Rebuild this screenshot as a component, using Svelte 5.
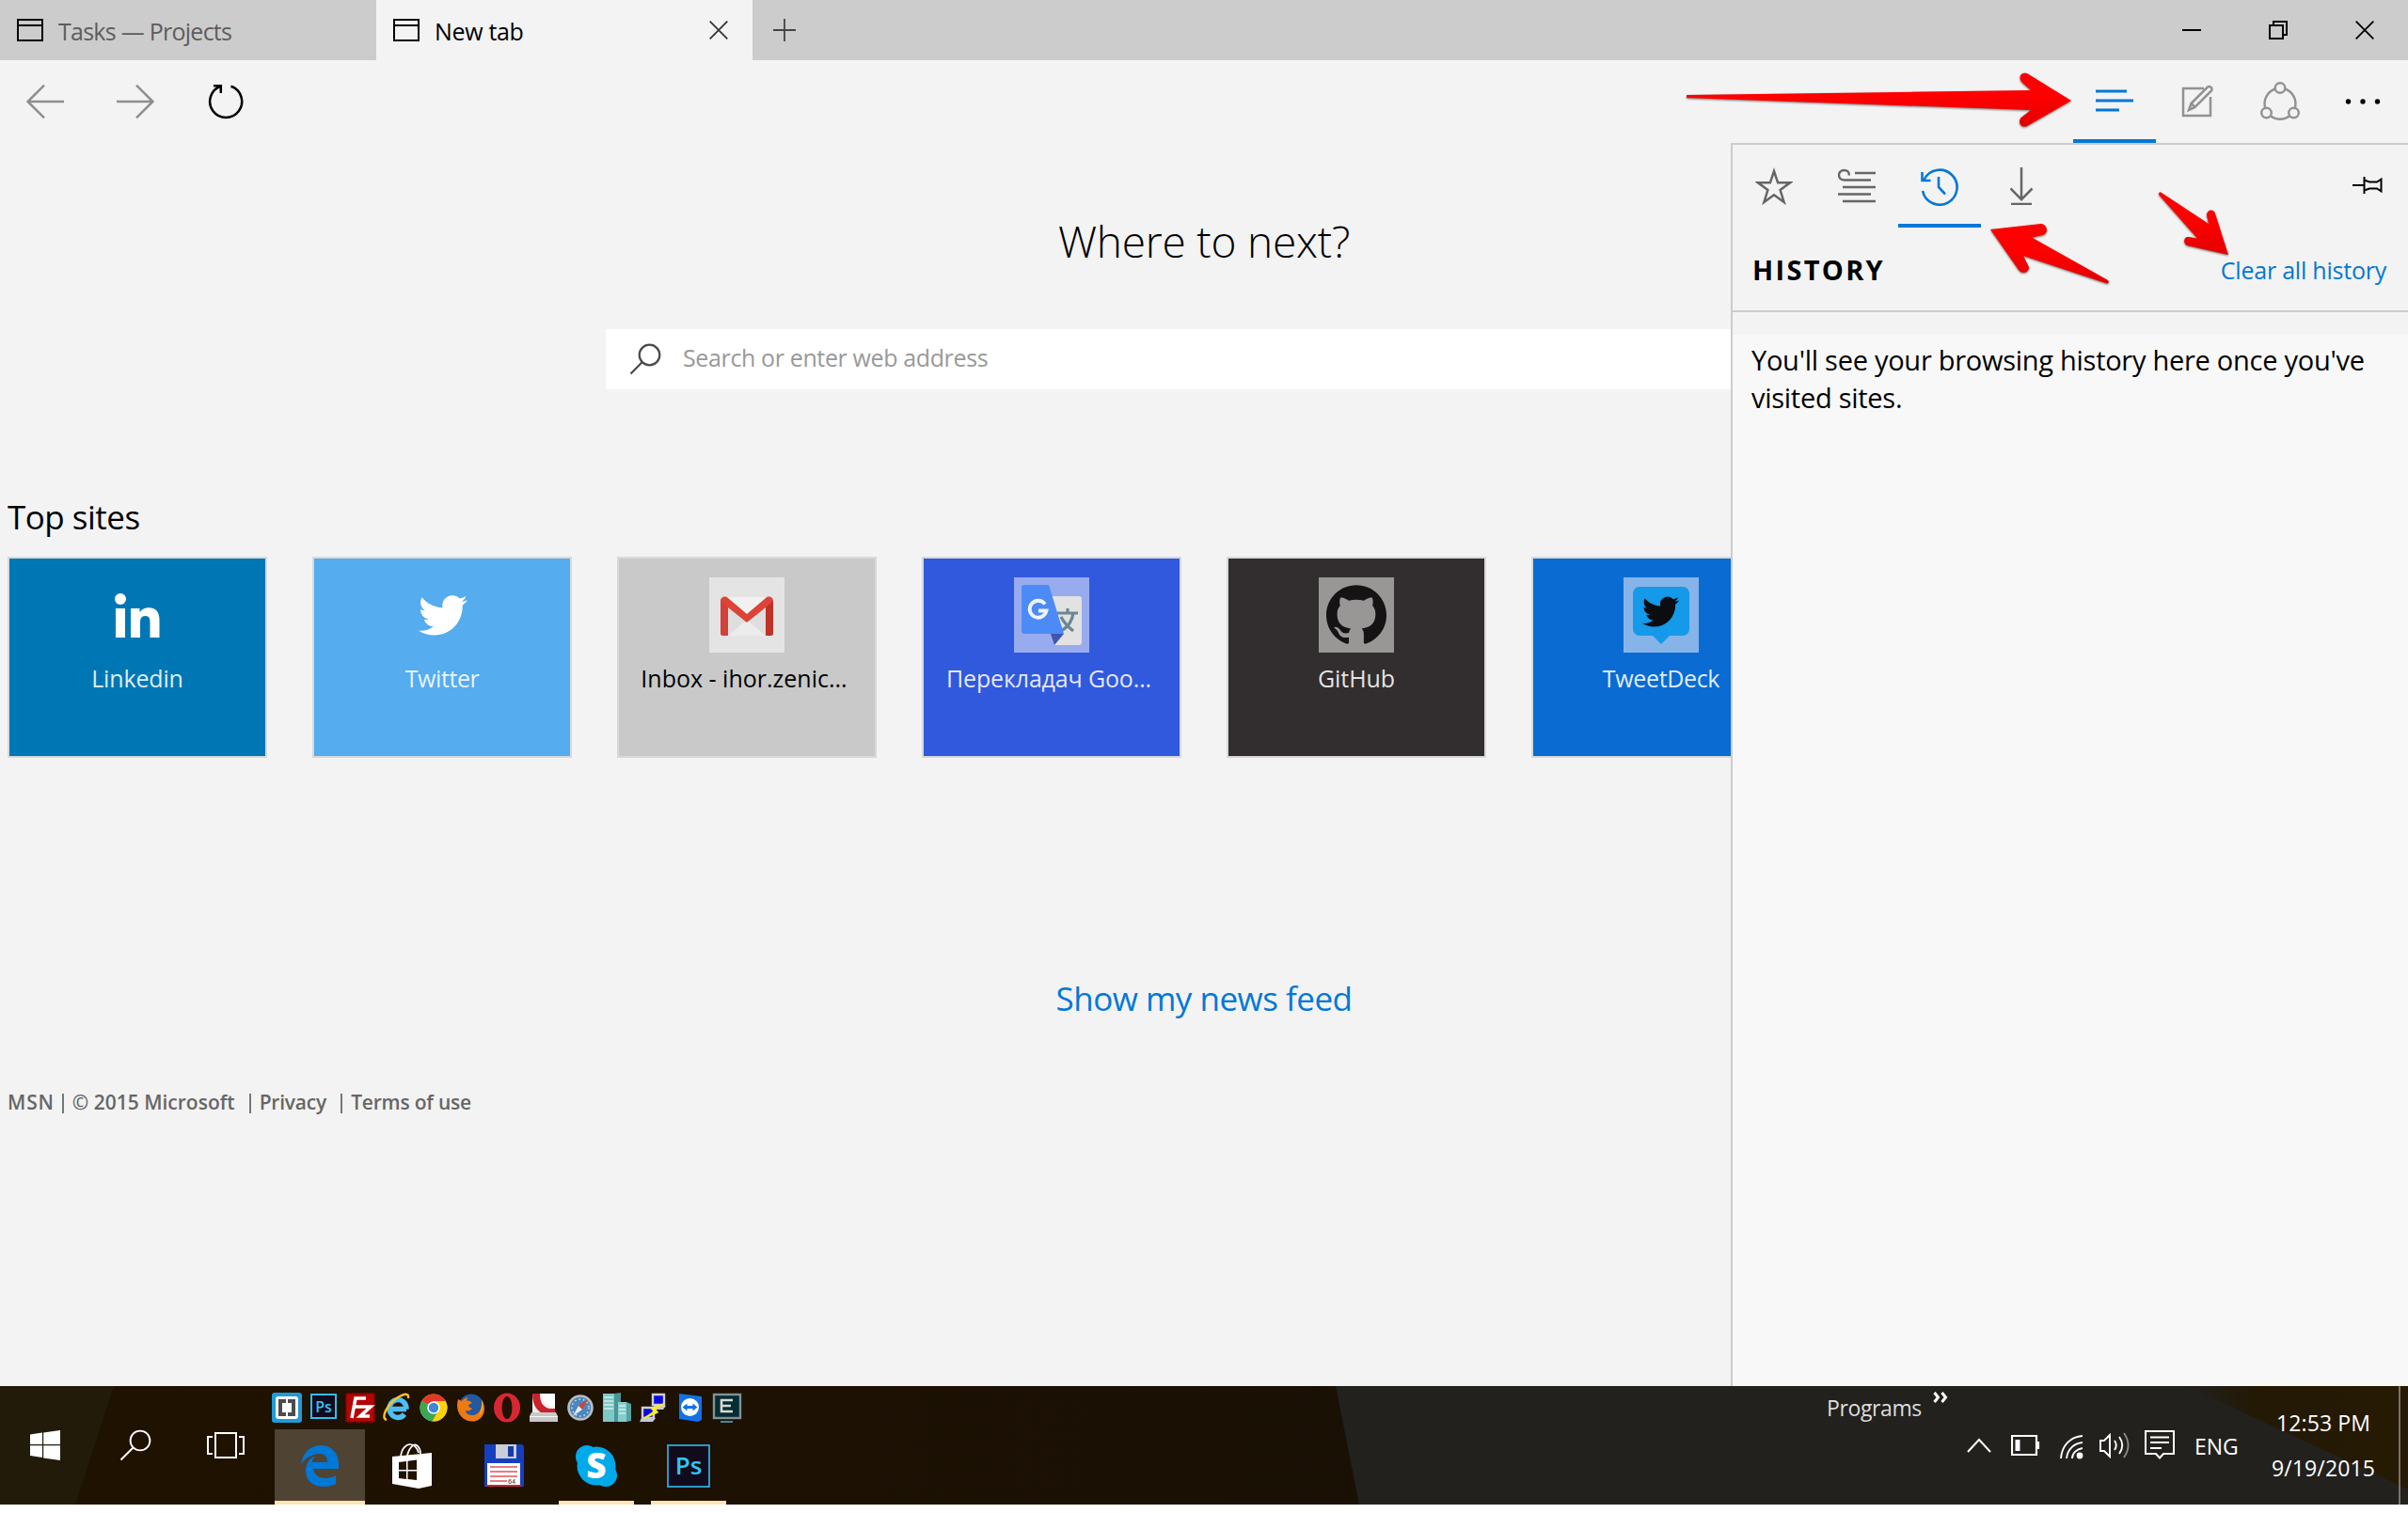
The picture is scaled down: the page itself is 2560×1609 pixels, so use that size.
<script>
  const sites = [
    { id: 'linkedin', label: 'Linkedin', bg: '#0077b5', spacing: -0.15 },
    { id: 'twitter', label: 'Twitter', bg: '#55acee', spacing: -0.4 },
    { id: 'gmail', label: 'Inbox - ihor.zenic...', bg: '#c9c9c9', dark: true, clipped: true, spacing: 0 },
    { id: 'translate', label: 'Перекладач Goo...', bg: '#3159de', clipped: true, spacing: -0.15 },
    { id: 'github', label: 'GitHub', bg: '#322e2f', spacing: -0.05 },
    { id: 'tweetdeck', label: 'TweetDeck', bg: '#0a6cd3', spacing: -0.35 }
  ];
  const quick = ['brackets', 'ps', 'filezilla', 'ie', 'chrome', 'firefox', 'opera', 'cureit', 'safari', 'servers', 'putty', 'teamviewer', 'console'];
  const birdPath = 'M23.953 4.57a10 10 0 01-2.825.775 4.958 4.958 0 002.163-2.723c-.951.555-2.005.959-3.127 1.184a4.92 4.92 0 00-8.384 4.482C7.69 8.095 4.067 6.13 1.64 3.162a4.822 4.822 0 00-.666 2.475c0 1.71.87 3.213 2.188 4.096a4.904 4.904 0 01-2.228-.616v.06a4.923 4.923 0 003.946 4.827 4.996 4.996 0 01-2.212.085 4.936 4.936 0 004.604 3.417 9.867 9.867 0 01-6.102 2.105c-.39 0-.779-.023-1.17-.067a13.995 13.995 0 007.557 2.209c9.053 0 13.998-7.496 13.998-13.985 0-.21 0-.42-.015-.63A9.935 9.935 0 0024 4.59z';
  const octocatPath = 'M12 .297c-6.63 0-12 5.373-12 12 0 5.303 3.438 9.8 8.205 11.385.6.113.82-.258.82-.577 0-.285-.01-1.04-.015-2.04-3.338.724-4.042-1.61-4.042-1.61C4.422 18.07 3.633 17.7 3.633 17.7c-1.087-.744.084-.729.084-.729 1.205.084 1.838 1.236 1.838 1.236 1.07 1.835 2.809 1.305 3.495.998.108-.776.417-1.305.76-1.605-2.665-.3-5.466-1.332-5.466-5.93 0-1.31.465-2.38 1.235-3.22-.135-.303-.54-1.523.105-3.176 0 0 1.005-.322 3.3 1.23.96-.267 1.98-.399 3-.405 1.02.006 2.04.138 3 .405 2.28-1.552 3.285-1.23 3.285-1.23.645 1.653.24 2.873.12 3.176.765.84 1.23 1.91 1.23 3.22 0 4.61-2.805 5.625-5.475 5.92.42.36.81 1.096.81 2.22 0 1.606-.015 2.896-.015 3.286 0 .315.21.69.825.57C20.565 22.092 24 17.592 24 12.297c0-6.627-5.373-12-12-12';
</script>

{#snippet pageIcon()}
  <svg class="page-icon" width="28" height="26" viewBox="0 0 28 26" fill="none" stroke="#000" stroke-width="2">
    <path d="M1 2h26v22H1zM1 8h26" />
  </svg>
{/snippet}

{#snippet siteIcon(id)}
  <svg width="80" height="80" viewBox="0 0 80 80">
    {#if id === 'linkedin'}
      <g fill="#fff">
        <circle cx="22" cy="23" r="6" />
        <rect x="17" y="33" width="10" height="31" />
        <path d="M33 33h9.500v4.300c1.600-2.900 5-5.100 9.500-5.100 9 0 11.500 6 11.500 14V64h-10V48.500c0-4-.6-7.500-5-7.500-4.500 0-5.500 3.500-5.500 7.300V64H33z" />
      </g>
    {:else if id === 'twitter'}
      <path fill="#fff" transform="translate(15 14.300) scale(2.167)" d={birdPath} />
    {:else if id === 'gmail'}
      <rect width="80" height="80" fill="#e4e4e4" />
      <path d="M14 21h52v41H14z" fill="#dedede" />
      <path d="M16 21h48L40 43z" fill="#f1f1f1" />
      <path d="M20 62l20-17 20 17z" fill="#ececec" />
      <path d="M12 25c0-4 5-6 8-3l20 17 20-17c3-3 8-1 8 3v34c0 2-1 3-3 3h-5V32L40 48 20 32v30h-5c-2 0-3-1-3-3z" fill="#db4437" />
      <path d="M60 32l8-7v34c0 2-1 3-3 3h-5z" fill="#bf3327" />
      <path d="M12 26l8 6v30h-5c-2 0-3-1-3-3z" fill="#d2403a" />
    {:else if id === 'translate'}
      <rect width="80" height="80" fill="#98abee" />
      <path d="M36 20h33a3 3 0 0 1 3 3v46a3 3 0 0 1-3 3H43z" fill="#e2e2e2" />
      <path d="M46 38h22M57 33v5M63 38c-1 8-6 15-13 19M50 42c3 6 8 11 13 15" stroke="#6b8791" stroke-width="3.200" fill="none" />
      <path d="M11 8h26l16 52H11a3 3 0 0 1-3-3V11a3 3 0 0 1 3-3z" fill="#4c8bf5" />
      <path d="M39 60h14L43 72z" fill="#4055b4" />
      <path d="M33 28.500a9 9 0 1 0 1.500 7H26" fill="none" stroke="#eef3fc" stroke-width="3.800" />
    {:else if id === 'github'}
      <rect width="80" height="80" fill="#999796" />
      <path fill="#151314" transform="translate(8 7.500) scale(2.667)" d={octocatPath} />
    {:else}
      <rect width="80" height="80" fill="#86b4e8" />
      <path d="M17 10h46a7 7 0 0 1 7 7v38a7 7 0 0 1-7 7H49l-9 9-9-9H17a7 7 0 0 1-7-7V17a7 7 0 0 1 7-7z" fill="#1599e9" />
      <path fill="#0b0d10" transform="translate(20 17) scale(1.630)" d={birdPath} />
    {/if}
  </svg>
{/snippet}

{#snippet quickIcon(id)}
  <svg width="32" height="32" viewBox="0 0 32 32">
    {#if id === 'brackets'}
      <rect width="32" height="32" rx="3" fill="#1f9bd8" />
      <rect x="4" y="4" width="24" height="24" rx="3" fill="#fff" />
      <path d="M15 9H9v14h6M17 9h6v14h-6" fill="none" stroke="#4c4c4c" stroke-width="4" />
    {:else if id === 'ps'}
      <rect x="3" y="2" width="26" height="25" fill="#120b1f" stroke="#33bdf0" stroke-width="2" />
      <text x="16" y="20.500" text-anchor="middle" class="glyph" font-size="16" fill="#31c5f4">Ps</text>
    {:else if id === 'filezilla'}
      <rect x="1" y="1" width="30" height="30" fill="#b50404" stroke="#8a0000" stroke-width="2" stroke-dasharray="2 1" />
      <path d="M7 27l4-21h11M9 15h9M17 15h10L16 25h10" fill="none" stroke="#fff" stroke-width="3.600" />
    {:else if id === 'ie'}
      <path d="M26 17.500H10M26 17.500A9 9.500 0 1 0 24 23" fill="none" stroke="#4fbdf2" stroke-width="5.400" />
      <path d="M5 29C-2 27 6 12 17 5c7-4 12-5 11 1" fill="none" stroke="#f5c32c" stroke-width="2.400" />
    {:else if id === 'chrome'}
      <circle cx="16" cy="16" r="14.500" fill="#fcd209" />
      <path d="M16 16L3.400 8.800A14.500 14.500 0 0 1 28.600 9z" fill="#e2382b" />
      <path d="M16 16L3.400 8.800A14.500 14.500 0 0 0 14.500 30.400L21 19z" fill="#3aa757" />
      <path d="M16 9h12.600a14.500 14.500 0 0 1-14 21.400L22 19z" fill="#fcd209" />
      <circle cx="16" cy="16" r="6.800" fill="#fff" />
      <circle cx="16" cy="16" r="5.200" fill="#3f86d8" />
    {:else if id === 'firefox'}
      <circle cx="17" cy="15" r="13.500" fill="#24589f" />
      <path d="M3 7c-2 7-1 14 4 19 6 6 16 6 21 0 4-5 4-13 0-18 1 8-2 15-9 16-5 0-8-2-8-5 3 1 5 0 7-2-2-1-4-2-4-4l4-2c-2-2-4-3-6-2l1-4c-3 1-5 2-6 4z" fill="#ee7a14" />
      <path d="M28 8c2 7 1 13-3 17 4-7 3-12 3-17z" fill="#fbc02d" />
    {:else if id === 'opera'}
      <ellipse cx="16" cy="16" rx="14" ry="15.500" fill="#d92633" />
      <ellipse cx="16" cy="16" rx="5.500" ry="12" fill="#201200" />
    {:else if id === 'cureit'}
      <path d="M4 1h24v21H4z" fill="#f1f1f1" />
      <path d="M4 1h8c0 9 3 15 11 16h5v6H17C8 20 4 12 4 1z" fill="#c9222c" />
      <path d="M14 1h14v13c-8 1-13-4-14-13z" fill="#fff" />
      <path d="M3 21h26l2 4v6H1v-6z" fill="#c8c8c8" />
      <path d="M1 25h30v1H1z" fill="#f8f8f8" />
    {:else if id === 'safari'}
      <circle cx="16" cy="16" r="12.500" fill="#4b86bd" stroke="#b9bec3" stroke-width="2.600" />
      <circle cx="16" cy="16" r="9" fill="none" stroke="#d8e8f4" stroke-width="1.500" stroke-dasharray="1.500 3" />
      <path d="M24 7l-6 11-4-4z" fill="#d8402f" />
      <path d="M8 25l6-11 4 4z" fill="#e9eef2" />
    {:else if id === 'servers'}
      <path d="M1 1h12v30H1z" fill="#7fc8c6" />
      <path d="M13 1l7-1v31h-7z" fill="#4c9597" />
      <path d="M17 10h9v21h-9z" fill="#86cdcb" />
      <path d="M26 10l5 2v18l-5 1z" fill="#57a3a4" />
      <path d="M2 5h10M2 9h10M2 13h10M2 17h10M18 14h7M18 18h7M18 22h7" stroke="#cdeeed" stroke-width="1.500" />
    {:else if id === 'putty'}
      <path d="M15 2h12v11H15zM4 16h12v11H4z" fill="#0a0ae0" stroke="#cfcfcf" stroke-width="2.400" />
      <path d="M16 14h13l-3 4H16zM3 27h15l-3 4H1z" fill="#c9c9c9" />
      <path d="M27 12L14 17l3 3L6 27l14-6-3-4z" fill="#ffec1a" stroke="#ffec1a" stroke-width="1.500" />
    {:else if id === 'teamviewer'}
      <path d="M4 1l24 3v25l-4 2L4 28z" fill="#1272e6" />
      <circle cx="15.500" cy="15.500" r="9.500" fill="#fff" />
      <path d="M7.500 15.500l5-4v2.500h6v-2.500l5 4-5 4V17h-6v2.500z" fill="#1272e6" />
    {:else}
      <rect x="2" y="2" width="28" height="25" fill="#062b33" stroke="#7d9498" stroke-width="2.400" />
      <path d="M22 8H10v12h12M10 14h10" fill="none" stroke="#d6d9cf" stroke-width="2.600" />
      <path d="M9 31h13" stroke="#4b8791" stroke-width="2" />
    {/if}
  </svg>
{/snippet}

<div class="screen">
  <div class="window">
    <header class="tabs">
      <div class="tab">
        {@render pageIcon()}
        <span class="tab-title wide">Tasks — Projects</span>
      </div>
      <div class="tab active">
        {@render pageIcon()}
        <span class="tab-title">New tab</span>
        <svg class="close" width="20" height="20" viewBox="0 0 20 20" stroke="#333" stroke-width="1.800"><path d="M.7.7l18.600 18.600M19.300.7L.7 19.300" /></svg>
      </div>
      <svg class="add" width="24" height="24" viewBox="0 0 24 24" stroke="#444" stroke-width="1.800"><path d="M12 0v24M0 12h24" /></svg>
      <div class="controls">
        <span><svg width="20" height="20" viewBox="0 0 20 20" stroke="#000" stroke-width="2"><path d="M0 10h20" /></svg></span>
        <span><svg width="20" height="20" viewBox="0 0 20 20" fill="none" stroke="#000" stroke-width="2"><path d="M1 5h14v14H1zM5 5V1h14v14h-4" /></svg></span>
        <span><svg width="20" height="20" viewBox="0 0 20 20" stroke="#000" stroke-width="1.800"><path d="M.7.7l18.600 18.600M19.300.7L.7 19.300" /></svg></span>
      </div>
    </header>

    <nav class="toolbar">
      <div class="nav-btn"><svg width="40" height="36" viewBox="0 0 40 36" fill="none" stroke="#8e8e8e" stroke-width="2.500"><path d="M40 18H1.500M19 .7L1.500 18 19 35.300" /></svg></div>
      <div class="nav-btn"><svg width="40" height="36" viewBox="0 0 40 36" fill="none" stroke="#8e8e8e" stroke-width="2.500"><path d="M0 18h38.500M21 .7L38.500 18 21 35.300" /></svg></div>
      <div class="nav-btn"><svg width="38" height="38" viewBox="0 0 38 38" fill="none" stroke="#000" stroke-width="2.500"><path d="M24.500 2.800A17 17 0 1 1 13.800 2.800M6 2.200h7.800V10" /></svg></div>
      <div class="tools">
        <div class="tool selected">
          <svg width="40" height="26" viewBox="0 0 40 26" stroke="#0078d7" stroke-width="2.800"><path d="M0 2h33M0 12h40M0 22h25" /></svg>
        </div>
        <div class="tool">
          <svg width="36" height="36" viewBox="0 0 36 36" fill="none" stroke="#929292" stroke-width="2.500"><path d="M25 4H3v29h29V13M9 27l2.500-7L29 2.500a2.900 2.900 0 0 1 4 4L15.500 24zM11.500 20l4 4" /></svg>
        </div>
        <div class="tool">
          <svg width="42" height="42" viewBox="0 0 42 42" fill="none" stroke="#929292" stroke-width="2.400"><circle cx="21" cy="6.500" r="5.300" /><circle cx="6.500" cy="33" r="5.300" /><circle cx="35.500" cy="33" r="5.300" /><path d="M15.800 7.500A17 17 0 0 0 5 27.500M26.200 7.500A17 17 0 0 1 37 27.500M11 36.500a17 17 0 0 0 20 0" /></svg>
        </div>
        <div class="tool">
          <svg width="38" height="8" viewBox="0 0 38 8" fill="#000"><circle cx="3.500" cy="4" r="2.700" /><circle cx="19" cy="4" r="2.700" /><circle cx="34.500" cy="4" r="2.700" /></svg>
        </div>
      </div>
    </nav>

    <main>
      <h1>Where to next?</h1>
      <div class="search">
        <svg width="34" height="34" viewBox="0 0 34 34" fill="none" stroke="#4a4a4a" stroke-width="2.200"><circle cx="21.500" cy="12.500" r="10.800" /><path d="M13.500 20.200L1.500 32.500" /></svg>
        <span>Search or enter web address</span>
      </div>
      <h2>Top sites</h2>
      <div class="sites">
        {#each sites as site (site.id)}
          <div class="site" class:dark={site.dark} class:clipped={site.clipped} style:background-color={site.bg}>
            {@render siteIcon(site.id)}
            <span style:letter-spacing="{site.spacing}px">{site.label}</span>
          </div>
        {/each}
      </div>
      <div class="feed">Show my news feed</div>
      <footer>
        <span class="msn">MSN</span><i></i><span class="ms">© 2015 Microsoft</span><i></i><span class="privacy">Privacy</span><i></i><span>Terms of use</span>
      </footer>
    </main>

    <aside class="panel">
      <div class="panel-tabs">
        <div class="tool"><svg width="40" height="40" viewBox="0 0 40 40" fill="none" stroke="#666" stroke-width="2.500"><path d="M20 4l4.100 12.300H37L26.600 24l4 13L20 29.300 9.400 37l4-13L3 16.300h12.900z" /></svg></div>
        <div class="tool"><svg width="40" height="38" viewBox="0 0 40 38" fill="none" stroke="#666" stroke-width="2.400"><path d="M11.500 7.500C12.500 4 9.500 2 6.500 2 3 2 1 4.500 1 7c0 3.500 2.500 5.500 6 5.500h28M18 5h22M5 20h35M0 27.500h35M5 35h35" /></svg></div>
        <div class="tool selected"><svg width="42" height="42" viewBox="0 0 42 42" fill="none" stroke="#0078d7" stroke-width="2.600"><path d="M4.500 14A18.500 18.500 0 1 1 3 26M2.500 6v9h9M20 11v11l7 7.500" /></svg></div>
        <div class="tool"><svg width="26" height="40" viewBox="0 0 26 40" fill="none" stroke="#666" stroke-width="2.500"><path d="M12 0v34M.5 22.500L12 34.200l11.500-11.700M1 39h22" /></svg></div>
        <svg class="pin" width="32" height="20" viewBox="0 0 32 20" fill="none" stroke="#000" stroke-width="2"><path d="M0 10h12M12.500 1v18M12.500 4.500L18 6.500h8l4.500-3v13l-4.500-3h-8l-5.500 2" /></svg>
      </div>
      <div class="panel-head">
        <h3>HISTORY</h3>
        <span>Clear all history</span>
      </div>
      <div class="panel-body">
        <p>You'll see your browsing history here once you've<br />visited sites.</p>
      </div>
    </aside>

    <svg class="arrows" width="620" height="250" viewBox="1780 70 620 250">
      <defs>
        <linearGradient id="red" x1="0" y1="0" x2="0" y2="1"><stop offset="0" stop-color="#ff0000" /><stop offset=".45" stop-color="#fe0000" /><stop offset="1" stop-color="#e30000" /></linearGradient>
      </defs>
      <g fill="url(#red)">
        <path d="M1793 101L2159 96 2150 88C2145 83 2148 76 2155 78L2202 107 2155 134C2148 137 2144 128 2150 124L2159 117 1793 104z" />
        <path d="M2116 244L2170 238C2177 239 2178 248 2172 250L2160 252.500 2241 298Q2243 301 2240 301.500L2151 272 2157 284C2157 290 2150 292 2146 287z" />
        <path d="M2369 271L2325 261C2320 258 2322 251 2327 252L2336 253.500 2295 207Q2295 203 2298 205L2348 238 2346 229C2346 223 2353 221 2355 227z" />
      </g>
    </svg>
  </div>

  <div class="taskbar">
    <svg class="wallpaper" width="2560" height="126" viewBox="0 0 2560 126" preserveAspectRatio="none">
      <defs>
        <linearGradient id="base"><stop offset="0" stop-color="#201200" /><stop offset=".6" stop-color="#191005" /></linearGradient>
        <linearGradient id="corner"><stop offset="0" stop-color="#22211f" /><stop offset=".3" stop-color="#231904" /><stop offset="1" stop-color="#261a04" /></linearGradient>
      </defs>
      <path d="M0 0h2560v126H0z" fill="url(#base)" />
      <path d="M0 0h121L80 126H0z" fill="#221b0a" />
      <path d="M1420 0h1140v126H1445z" fill="#22211e" />
      <path d="M2325 0h235v110z" fill="url(#corner)" />
    </svg>
    <div class="start"><svg width="32" height="32" viewBox="0 0 32 32" fill="#fff"><path d="M0 4.500L13 2.600V15H0zM14.200 2.400L32 0v15H14.200zM0 16.300h13v12.600L0 27zM14.200 16.300H32V32l-17.800-2.600z" /></svg></div>
    <div class="start"><svg width="34" height="34" viewBox="0 0 34 34" fill="none" stroke="#fff" stroke-width="1.900"><circle cx="22" cy="12" r="10.400" /><path d="M14.500 19.500L1.500 32.500" /></svg></div>
    <div class="start"><svg width="40" height="28" viewBox="0 0 40 28" fill="none" stroke="#fff" stroke-width="2"><path d="M9 1h22v26H9zM6 5H1v18h5M34 5h5v18h-5" /></svg></div>
    <div class="apps">
      <div class="quick">
        {#each quick as id (id)}{@render quickIcon(id)}{/each}
      </div>
      <div class="running">
        <div class="app current">
          <svg width="40" height="44" viewBox="0 0 40 44" fill="#0078d7"><path d="M0 20C2 8 10 0 21 0c12 0 19 9 19 20v5H13c1 7 7 10 13 10 4 0 8-1 11-3v9c-4 2-8 3-13 3C12 44 5 37 5 27c0-7 4-13 10-16-2 2-3 5-3 7h16c0-6-3-9-8-9C12 9 5 13 0 20z" /></svg>
        </div>
        <div class="app">
          <svg width="44" height="50" viewBox="0 0 44 50"><path d="M10 15C11 6 16 2 20 2s8 4 9 9M17 14C19 5 24 1 27 3s4 5 4 9" fill="none" stroke="#fff" stroke-width="1.700" /><path d="M1 15l42-4v35l-14 3L1 44z" fill="#fff" /><path d="M8 21l8-1v9H8zM17.500 19.800L27 18.500V29h-9.500zM8 30.500h8V39l-8-1zM17.500 30.500H27V40l-9.500-1z" fill="#201200" /></svg>
        </div>
        <div class="app">
          <svg width="44" height="46" viewBox="0 0 44 46"><path d="M1 0h40l2 2v43H1z" fill="#163fc0" /><path d="M13 0h22v15H13z" fill="#c9ced8" /><path d="M26 2h6v11h-6z" fill="#1a3aa8" /><path d="M4 20h35v23H4z" fill="#fff" /><path d="M7 24h29M7 29h29M7 34h29M7 39h18" stroke="#e0525c" stroke-width="1.300" /><path d="M3 43h37v2H3z" fill="#c3283a" /><text x="26" y="42" class="glyph" font-size="7" fill="#555">64</text></svg>
        </div>
        <div class="app open">
          <svg width="46" height="46" viewBox="0 0 46 46"><g fill="#00aaea"><circle cx="23" cy="23" r="20.500" /><circle cx="13" cy="13" r="12" /><circle cx="33" cy="33" r="12" /></g><text x="23" y="36" text-anchor="middle" class="glyph heavy" font-size="37" fill="#fff">S</text></svg>
        </div>
        <div class="app open">
          <svg width="46" height="46" viewBox="0 0 46 46"><rect x="1" y="1" width="44" height="44" fill="#110b1d" stroke="#2fa9da" stroke-width="1.800" /><text x="23" y="32" text-anchor="middle" class="glyph" font-size="26" fill="#31c5f4">Ps</text></svg>
        </div>
      </div>
    </div>
    <div class="programs">
      <span>Programs</span>
      <svg width="18" height="12" viewBox="0 0 18 12" fill="none" stroke="#fff" stroke-width="3"><path d="M1.500 1l4 5-4 5M9.500 1l4 5-4 5" /></svg>
    </div>
    <div class="tray">
      <svg width="26" height="16" viewBox="0 0 26 16" fill="none" stroke="#fff" stroke-width="2"><path d="M1 15L13 2l12 13" /></svg>
      <svg class="battery" width="31" height="22" viewBox="0 0 31 22" fill="none" stroke="#fff" stroke-width="2.200"><path d="M1 1h26v20H1zM29 7v8" /><path d="M4.500 5h5v12h-5z" fill="#fff" stroke="none" /></svg>
      <svg class="wifi" width="26" height="26" viewBox="0 0 26 26" fill="none" stroke="#fff" stroke-width="1.900"><path d="M1 25C2 11 11 2 24 1M7 25c1-10 8-16 17-17M13 25c0-6 5-10 11-11" /><circle cx="21" cy="22" r="3.400" fill="#fff" stroke="none" /></svg>
      <svg class="sound" width="33" height="30" viewBox="0 0 33 30" fill="none" stroke="#fff" stroke-width="1.900"><path d="M1 10h4l6-6v23l-6-6H1zM16 10q3.500 5 0 10M21 6q6.500 9 0 18" /><path d="M26 2q9 13 0 26" stroke="#888" /></svg>
      <svg class="notice" width="32" height="32" viewBox="0 0 32 32" fill="none" stroke="#fff" stroke-width="2"><path d="M1 1h30v24H20l-4 4.500-4-4.500H1zM6 7.500h20M6 13h20M6 19h12" /></svg>
      <span>ENG</span>
    </div>
    <div class="clock"><span>12:53 PM</span><span>9/19/2015</span></div>
    <div class="peek"></div>
  </div>
</div>

<style>
  :global(body) { background: #fff; }
  .screen { width: 2560px; height: 1609px; overflow: hidden; font-family: 'Open Sans', 'Noto Sans', sans-serif; font-size: 25px; color: #000; }
  svg { display: block; flex: none; }
  h1, h2, h3, p { margin: 0; font-weight: 400; }
  .window { position: relative; height: 1474px; display: flex; flex-direction: column; background: #f3f3f3; overflow: hidden; }

  .tabs { display: flex; align-items: center; height: 64px; background: #ccc; flex: none; }
  .tab { display: flex; align-items: center; box-sizing: border-box; width: 400px; height: 64px; padding: 0 26px 0 18px; color: #5d5d5d; }
  .tab.active { background: #f3f3f3; color: #000; }
  .tab-title { margin: 1px 0 0 16px; letter-spacing: -0.33px; }
  .tab-title.wide { letter-spacing: -0.74px; }
  .close { margin-left: auto; }
  .add { margin-left: 22px; }
  .controls { display: flex; margin-left: auto; }
  .controls span { display: flex; justify-content: center; width: 92px; }

  .toolbar { display: flex; height: 88px; flex: none; }
  .nav-btn { display: flex; align-items: center; justify-content: center; width: 96px; }
  .tools { display: flex; margin-left: auto; padding-right: 4px; }
  .tool { display: flex; align-items: center; justify-content: center; width: 88px; height: 88px; box-sizing: border-box; border-top: 4px solid transparent; border-bottom: 4px solid transparent; }
  .tool.selected { border-bottom-color: #0078d7; }

  main { display: flex; flex-direction: column; padding-top: 74px; }
  h1 { text-align: center; font-size: 46px; font-weight: 350; line-height: 60px; letter-spacing: -0.2px; }
  .search { display: flex; align-items: center; align-self: center; box-sizing: border-box; width: 1272px; height: 64px; margin-top: 64px; padding: 0 25px; background: #fff; color: #999; letter-spacing: -0.37px; }
  .search span { margin-left: 23px; line-height: 60px; padding-bottom: 4px; }
  h2 { margin: 111px 0 17px 8px; font-size: 35px; line-height: 50px; letter-spacing: -0.5px; }
  .sites { display: flex; gap: 48px; padding-left: 8px; }
  .site { display: flex; flex-direction: column; align-items: center; flex: none; box-sizing: border-box; width: 276px; height: 214px; padding-top: 20px; border: 2px solid #d9d9d9; color: rgba(255, 255, 255, 0.88); }
  .site.dark { color: #000; }
  .site span { margin-top: 10px; line-height: 34px; white-space: nowrap; }
  .site.clipped span { padding-right: 6px; }
  .feed { margin-top: 231px; text-align: center; color: #0078d7; font-size: 35px; line-height: 50px; letter-spacing: -0.5px; }
  footer { display: flex; align-items: center; height: 30px; margin-top: 70px; padding-left: 8px; color: #666; font-size: 21px; font-weight: 600; letter-spacing: -0.2px; }
  footer i { width: 2px; height: 21px; margin: 3px 9px 0 8px; background: #777; }
  footer .msn { letter-spacing: 0.8px; }
  footer .ms { letter-spacing: 0; margin-right: 7px; }
  footer .privacy { margin-right: 7px; }

  .panel { position: absolute; left: 1840px; top: 152px; right: 0; bottom: 0; display: flex; flex-direction: column; border: solid #ccc; border-width: 2px 0 0 2px; background: #f3f3f3; }
  .panel-tabs { display: flex; align-items: center; height: 88px; flex: none; }
  .pin { margin: 0 27px 3px auto; }
  .panel-head { display: flex; align-items: center; justify-content: space-between; height: 88px; flex: none; padding: 0 23px 0 21px; border-bottom: 2px solid #ccc; }
  h3 { font-size: 29px; font-weight: 700; letter-spacing: 2.3px; }
  .panel-head span { color: #0078d7; letter-spacing: -0.22px; padding-top: 1px; }
  .panel-body { flex: 1; margin-top: 24px; padding: 7px 0 0 20px; background: #f8f8f8; font-size: 29px; line-height: 40px; letter-spacing: -0.27px; white-space: nowrap; }
  .arrows { position: absolute; left: 1780px; top: 70px; filter: drop-shadow(0 1px 1px rgba(0, 0, 0, 0.55)); }

  .taskbar { position: relative; display: flex; height: 126px; color: #fff; font-size: 23px; }
  .taskbar > * { position: relative; }
  .taskbar > .wallpaper { position: absolute; left: 0; top: 0; }
  .start { display: flex; align-items: center; justify-content: center; width: 96px; }
  .apps { display: flex; flex-direction: column; justify-content: space-between; }
  .quick { display: flex; gap: 7px; padding: 7px 0 0 1px; }
  .running { display: flex; padding-left: 4px; }
  .app { display: flex; align-items: center; justify-content: center; box-sizing: border-box; width: 80px; height: 80px; margin: 0 9px; padding-top: 2px; border-bottom: 4px solid transparent; }
  .app.current { width: 96px; margin: 0 1px 0 0; background: #4f4333; border-bottom-color: #ffe5b3; }
  .app.open { border-bottom-color: #ffe5b3; }
  .glyph { font-family: 'Open Sans', sans-serif; font-weight: 600; }
  .glyph.heavy { font-weight: 800; }
  .programs { display: flex; align-items: flex-start; width: 149px; margin-left: auto; padding-top: 7px; color: #ddd; }
  .programs span { letter-spacing: -0.38px; line-height: 32px; width: 113px; }
  .programs svg { margin-top: -1px; }
  .tray { display: flex; align-items: center; width: 307px; }
  .tray span { margin: 2px 0 0 21px; }
  .battery { margin-left: 21px; }
  .wifi { margin: 3px 0 0 21px; }
  .sound { margin-left: 16px; }
  .notice { margin-left: 15px; }
  .clock { display: flex; flex-direction: column; align-items: center; justify-content: center; box-sizing: border-box; width: 144px; padding-bottom: 1px; line-height: 48px; letter-spacing: 0.1px; }
  .peek { box-sizing: border-box; width: 10px; margin-left: 8px; border-left: 2px solid #77736d; }
</style>
